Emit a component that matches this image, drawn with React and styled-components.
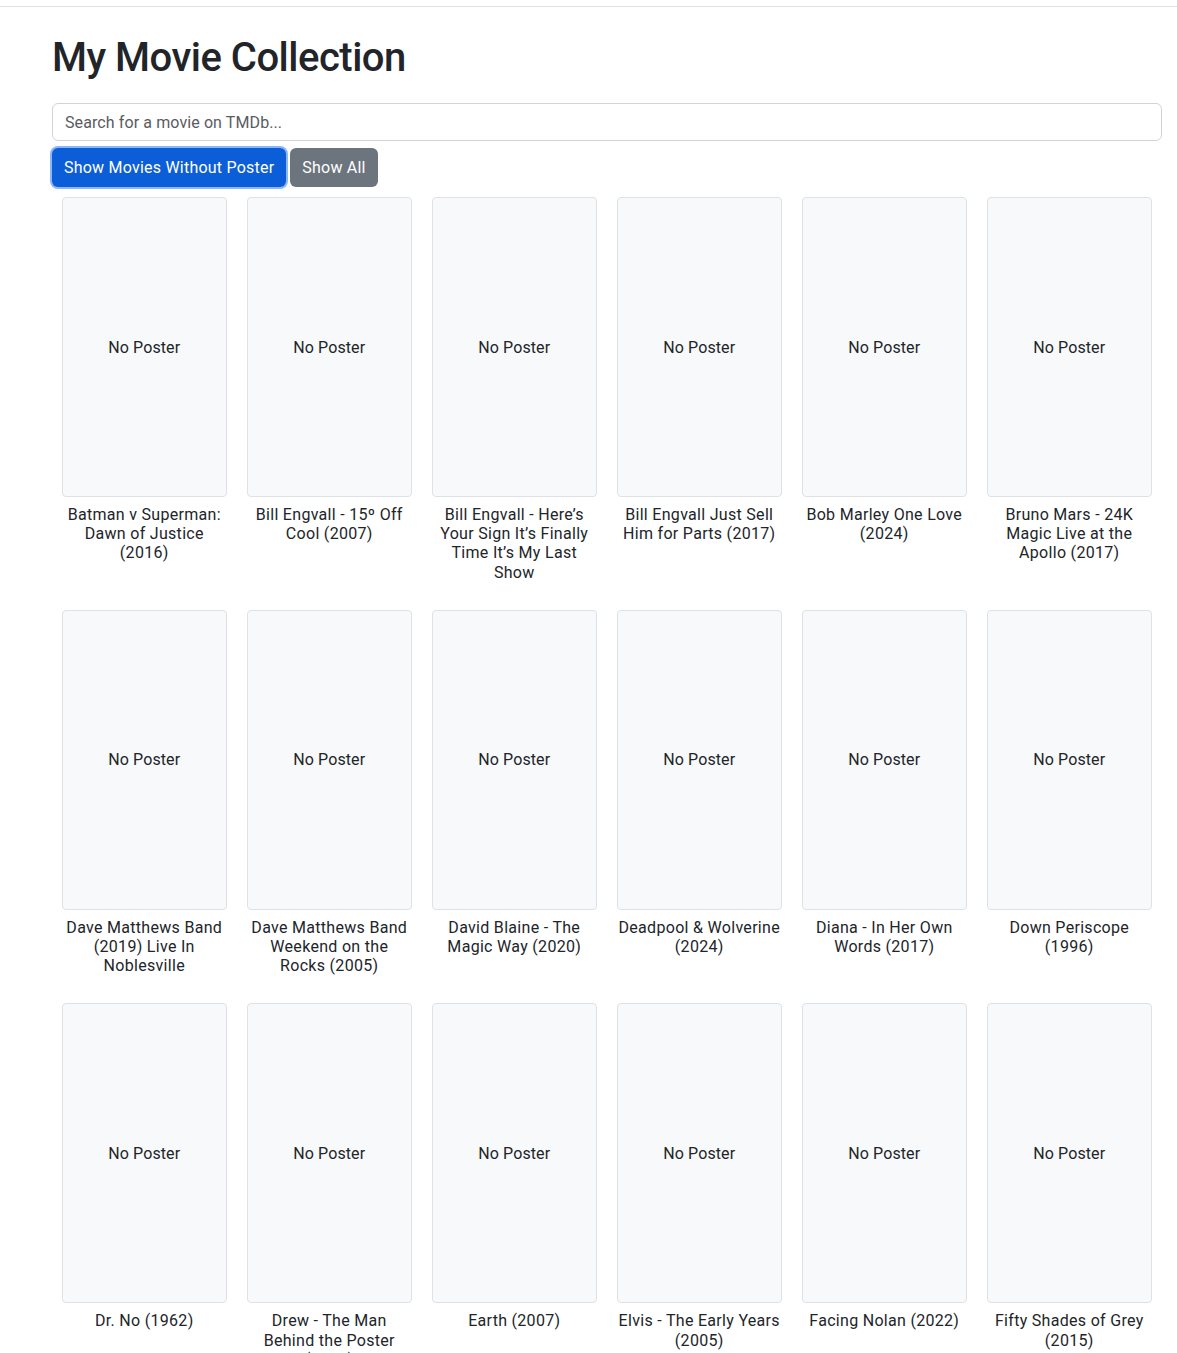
import styled, { createGlobalStyle } from 'styled-components'

const movies = [
   'Batman v Superman: Dawn of Justice (2016)',
   'Bill Engvall - 15º Off Cool (2007)',
   'Bill Engvall - Here’s Your Sign It’s Finally Time It’s My Last Show',
   'Bill Engvall Just Sell Him for Parts (2017)',
   'Bob Marley One Love (2024)',
   'Bruno Mars - 24K Magic Live at the Apollo (2017)',
   'Dave Matthews Band (2019) Live In Noblesville',
   'Dave Matthews Band Weekend on the Rocks (2005)',
   'David Blaine - The Magic Way (2020)',
   'Deadpool & Wolverine (2024)',
   'Diana - In Her Own Words (2017)',
   'Down Periscope (1996)',
   'Dr. No (1962)',
   'Drew - The Man Behind the Poster (2013)',
   'Earth (2007)',
   'Elvis - The Early Years (2005)',
   'Facing Nolan (2022)',
   'Fifty Shades of Grey (2015)',
]

const GlobalStyle = createGlobalStyle`
   body {
      margin: 0;
      font-family: 'Roboto', 'Liberation Sans', sans-serif;
      color: #212529;
      background: #ffffff;
   }
`

const App = () => {
   return (
      <>
         <GlobalStyle />
         <Page>
            <Container>
               <Title>My Movie Collection</Title>
               <SearchInput placeholder="Search for a movie on TMDb..." />
               <ButtonRow>
                  <Button $variant="primary">Show Movies Without Poster</Button>
                  <Button $variant="secondary">Show All</Button>
               </ButtonRow>
               <Grid>
                  {movies.map((name) => (
                     <Column key={name}>
                        <Poster>No Poster</Poster>
                        <MovieTitle>{name}</MovieTitle>
                     </Column>
                  ))}
               </Grid>
            </Container>
         </Page>
      </>
   )
}

export default App

const Page = styled.div`
   margin-top: 6px;
   border-top: 1px solid #dee2e6;
   height: 1346px;
   overflow: hidden;
`
const Container = styled.div`
   width: 1110px;
   margin-left: 52px;
   padding-top: 27px;
`
const Title = styled.h1`
   margin: 0 0 21px;
   font-size: 40px;
   font-weight: 500;
   line-height: 48px;
   letter-spacing: -0.5px;
`
const SearchInput = styled.input`
   display: block;
   box-sizing: border-box;
   width: 100%;
   height: 38px;
   padding: 6px 12px;
   font-family: inherit;
   font-size: 16px;
   letter-spacing: 0.1px;
   color: #212529;
   border: 1px solid #ced4da;
   border-radius: 6px;
   outline: none;
   &::placeholder {
      color: #595c5f;
   }
`
const ButtonRow = styled.div`
   display: flex;
   gap: 4px;
   margin-top: 7px;
`
const Button = styled.button`
   height: 39px;
   padding: 0 12px;
   font-family: inherit;
   font-size: 16px;
   letter-spacing: 0.22px;
   color: #ffffff;
   border: none;
   border-radius: 6px;
   background: ${(p) => (p.$variant === 'primary' ? '#0b5ed7' : '#6c757d')};
   box-shadow: ${(p) =>
      p.$variant === 'primary' ? '0 0 0 2px #8bb8fd' : 'none'};
`
const Grid = styled.div`
   display: grid;
   grid-template-columns: repeat(6, 1fr);
   margin-top: 10px;
`
const Column = styled.div`
   padding: 0 10.5px 28px 10px;
`
const Poster = styled.div`
   box-sizing: border-box;
   height: 300px;
   display: flex;
   align-items: center;
   justify-content: center;
   background: #f8f9fa;
   border: 1px solid #dee2e6;
   border-radius: 4px;
   font-size: 16px;
   letter-spacing: 0.1px;
`
const MovieTitle = styled.div`
   margin-top: 8px;
   font-size: 16px;
   line-height: 19.2px;
   letter-spacing: 0.3px;
   text-align: center;
`
